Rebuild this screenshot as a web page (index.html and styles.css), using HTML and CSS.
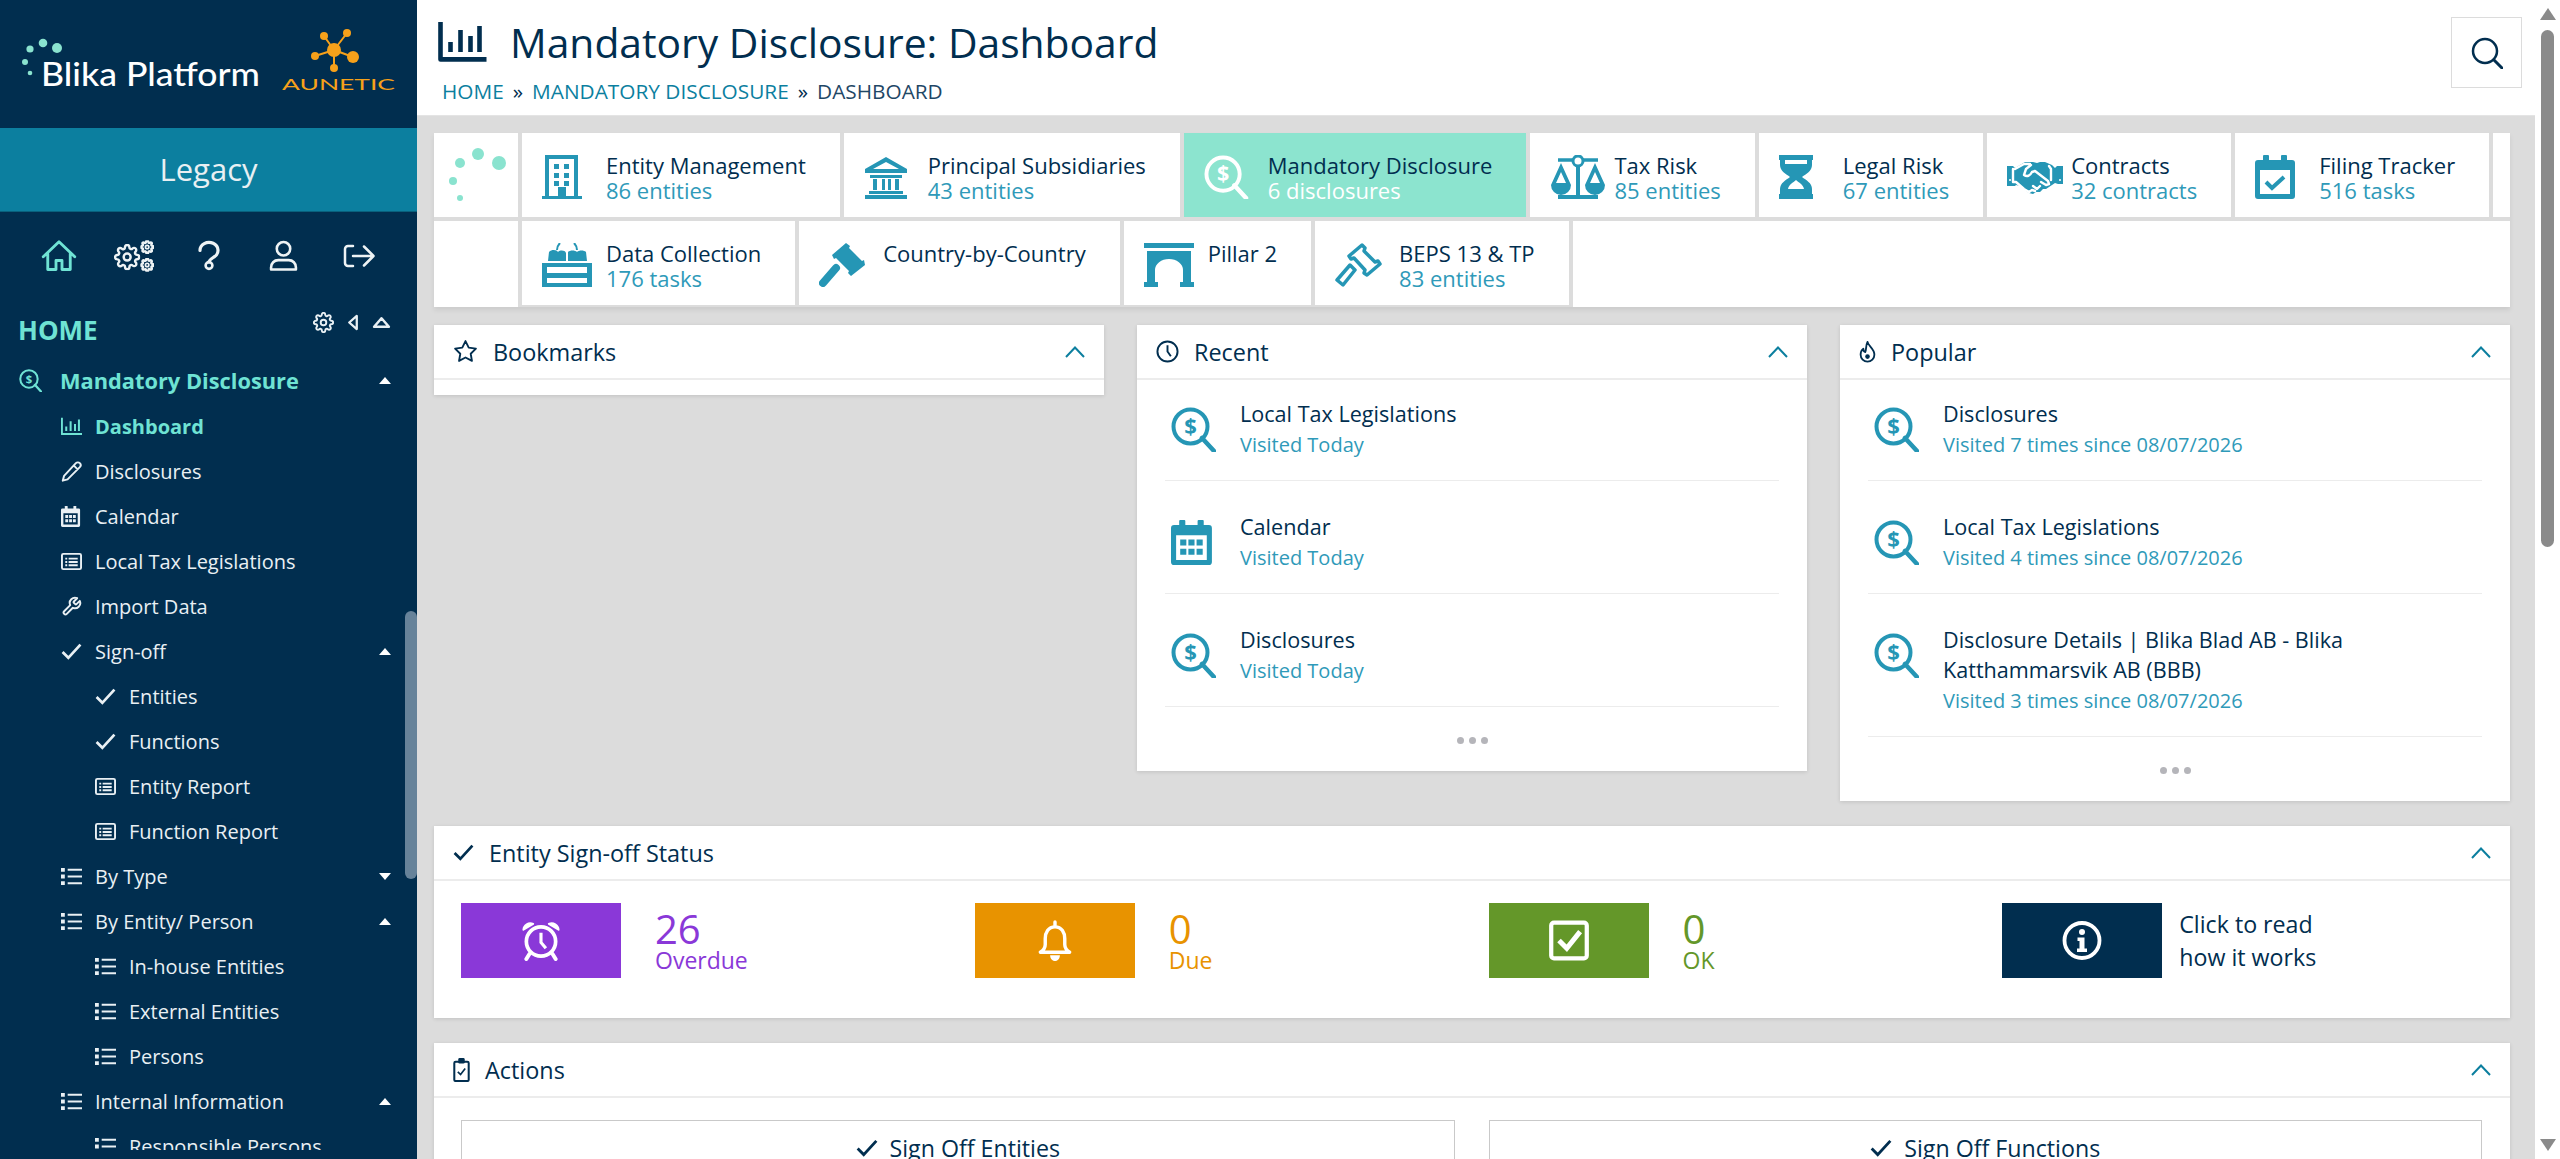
FILE: index.html
```html
<!DOCTYPE html>
<html>
<head>
    <meta charset="UTF-8">
    <title>Mandatory Disclosure: Dashboard</title>
    <link rel="stylesheet" href="styles.css">
</head>

<body>

    <svg class="icon-defs" xmlns="http://www.w3.org/2000/svg">
        <defs>
            <path id="gear-d" fill="none" stroke="currentColor" d="M19.4 15a1.65 1.65 0 0 0 .33 1.82l.06.06a2 2 0 0 1 0 2.83 2 2 0 0 1-2.83 0l-.06-.06a1.65 1.65 0 0 0-1.82-.33 1.65 1.65 0 0 0-1 1.51V21a2 2 0 0 1-2 2 2 2 0 0 1-2-2v-.09A1.65 1.65 0 0 0 9 19.4a1.65 1.65 0 0 0-1.82.33l-.06.06a2 2 0 0 1-2.83 0 2 2 0 0 1 0-2.83l.06-.06a1.65 1.65 0 0 0 .33-1.82 1.65 1.65 0 0 0-1.51-1H3a2 2 0 0 1-2-2 2 2 0 0 1 2-2h.09A1.65 1.65 0 0 0 4.6 9a1.65 1.65 0 0 0-.33-1.82l-.06-.06a2 2 0 0 1 0-2.83 2 2 0 0 1 2.83 0l.06.06a1.65 1.65 0 0 0 1.82.33H9a1.65 1.65 0 0 0 1-1.51V3a2 2 0 0 1 2-2 2 2 0 0 1 2 2v.09a1.65 1.65 0 0 0 1 1.51 1.65 1.65 0 0 0 1.82-.33l.06-.06a2 2 0 0 1 2.83 0 2 2 0 0 1 0 2.83l-.06.06a1.65 1.65 0 0 0-.33 1.82V9a1.65 1.65 0 0 0 1.51 1H21a2 2 0 0 1 2 2 2 2 0 0 1-2 2h-.09a1.65 1.65 0 0 0-1.51 1z"/>
        </defs>
        <symbol id="i-home" viewBox="0 0 24 24"><path d="M1.5 12.5 12 2.5l10.5 10M4.5 10.5V21h5.5v-6h4v6h5.5V10.5" fill="none" stroke="currentColor" stroke-width="1.9" stroke-linejoin="round" stroke-linecap="round"/></symbol>
        <symbol id="i-gear" viewBox="0 0 24 24"><circle cx="12" cy="12" r="3.200" fill="none" stroke="currentColor" stroke-width="2.200"/><use href="#gear-d" stroke-width="2.200"/></symbol>
        <symbol id="i-gear-sm" viewBox="0 0 24 24"><circle cx="12" cy="12" r="3" fill="none" stroke="currentColor" stroke-width="3"/><use href="#gear-d" stroke-width="4"/></symbol>
        <symbol id="i-gears" viewBox="0 0 38 30"><use href="#i-gear" x="0" y="3.500" width="25" height="25"/><use href="#i-gear-sm" x="25" y="0" width="13" height="13"/><use href="#i-gear-sm" x="25" y="17" width="13" height="13"/></symbol>
        <symbol id="i-question" viewBox="0 0 24 30"><path d="M3 10a9 8 0 1 1 14 6.500c-3 2-5 3-5 5" fill="none" stroke="currentColor" stroke-width="3.200" stroke-linecap="round"/><circle cx="12" cy="25" r="3.400" fill="none" stroke="currentColor" stroke-width="2.600"/></symbol>
        <symbol id="i-user" viewBox="0 0 28 30"><circle cx="14" cy="8" r="6.500" fill="none" stroke="currentColor" stroke-width="2.500"/><path d="M2 28v-2c0-4 3-7 7-7h10c4 0 7 3 7 7v2z" fill="none" stroke="currentColor" stroke-width="2.500" stroke-linejoin="round"/></symbol>
        <symbol id="i-logout" viewBox="0 0 32 26"><path d="M10 3H5a3 3 0 0 0-3 3v14a3 3 0 0 0 3 3h5M10 13h20M21 3.500 30.500 13 21 22.500" fill="none" stroke="currentColor" stroke-width="2.500" stroke-linecap="round" stroke-linejoin="round"/></symbol>
        <symbol id="i-left" viewBox="0 0 12 18"><path d="M10 2v14L2 9z" fill="none" stroke="currentColor" stroke-width="2.400" stroke-linejoin="round"/></symbol>
        <symbol id="i-up" viewBox="0 0 18 12"><path d="M2 10h14L9 2z" fill="none" stroke="currentColor" stroke-width="2.400" stroke-linejoin="round"/></symbol>
        <symbol id="i-caret" viewBox="0 0 12 7"><path d="M0 7 6 0l6 7z" fill="currentColor"/></symbol>
        <symbol id="i-dollar" viewBox="0 0 45 45" preserveAspectRatio="xMinYMid meet"><circle cx="19.500" cy="19.500" r="17" fill="none" stroke="currentColor" stroke-width="4"/><path d="M31 31 43 44" fill="none" stroke="currentColor" stroke-width="4.500" stroke-linecap="round"/><text x="19.500" y="27" text-anchor="middle" font-family="Open Sans" font-size="22" font-weight="700" fill="currentColor">$</text></symbol>
        <symbol id="i-chart" viewBox="0 0 24 20"><path d="M1 0v18.700h23" fill="none" stroke="currentColor" stroke-width="2.300" stroke-linejoin="round"/><path d="M6 15V10M11 15V4M16 15V7M20.500 15V2" fill="none" stroke="currentColor" stroke-width="2.300"/></symbol>
        <symbol id="i-pencil" viewBox="0 0 24 24"><path d="M17 2.500a3 3 0 0 1 4.500 4.500L7.500 21 2 22.500l1.500-5.500zM14.500 5l4.500 4.500" fill="none" stroke="currentColor" stroke-width="2.200" stroke-linejoin="round"/></symbol>
        <symbol id="i-calendar" viewBox="0 0 40 44" preserveAspectRatio="xMinYMid meet"><path fill="currentColor" fill-rule="evenodd" d="M0 8a3 3 0 0 1 3-3h34a3 3 0 0 1 3 3v33a3 3 0 0 1-3 3H3a3 3 0 0 1-3-3zM5 15v24h30V15z"/><rect x="8" y="0" width="6" height="9" rx="1" fill="currentColor"/><rect x="26" y="0" width="6" height="9" rx="1" fill="currentColor"/><path fill="currentColor" d="M9 19h6v6H9zM17 19h6v6h-6zM25 19h6v6h-6zM9 28h6v6H9zM17 28h6v6h-6zM25 28h6v6h-6z"/></symbol>
        <symbol id="i-listalt" viewBox="0 0 22 18"><rect x="1" y="1" width="20" height="16" rx="1.500" fill="none" stroke="currentColor" stroke-width="2"/><path d="M4.500 5h2v2h-2zM4.500 8.500h2v2h-2zM4.500 12h2v2h-2zM8 5h9.500v2H8zM8 8.500h9.500v2H8zM8 12h9.500v2H8z" fill="currentColor"/></symbol>
        <symbol id="i-wrench" viewBox="0 0 24 24"><path fill="none" stroke="currentColor" stroke-width="2.200" stroke-linejoin="round" d="M14.700 6.300a1 1 0 0 0 0 1.400l1.600 1.600a1 1 0 0 0 1.400 0l3.770-3.770a6 6 0 0 1-7.940 7.940l-6.910 6.910a2.120 2.120 0 0 1-3-3l6.910-6.910a6 6 0 0 1 7.940-7.940l-3.760 3.760z"/></symbol>
        <symbol id="i-check" viewBox="0 0 20 16"><path d="M1.500 8.500 7 14 18.500 1.500" fill="none" stroke="currentColor" stroke-width="2.600"/></symbol>
        <symbol id="i-listul" viewBox="0 0 22 18"><path fill="currentColor" d="M0 0h4v4H0zM0 7h4v4H0zM0 14h4v4H0zM7 1h15v2H7zM7 8h15v2H7zM7 15h15v2H7z"/></symbol>
        <symbol id="i-building" viewBox="0 0 64 44" preserveAspectRatio="xMinYMid meet"><path fill="currentColor" fill-rule="evenodd" d="M3 0h33v41h4v3H0v-3h3zM7 4v37h9V32h8v9h8V4z"/><path fill="currentColor" d="M12 9h5v5h-5zM22 9h5v5h-5zM12 18h5v5h-5zM22 18h5v5h-5zM12 26h5v5h-5zM22 26h5v5h-5z"/></symbol>
        <symbol id="i-bank" viewBox="0 0 64 44" preserveAspectRatio="xMinYMid meet"><path fill="currentColor" fill-rule="evenodd" d="M22 2 43 14v4H1v-4zM22 7 9 14h26z"/><path fill="currentColor" d="M6 20h32v3H6zM9 24h4v11H9zM18 24h3v11h-3zM24 24h3v11h-3zM31 24h4v11h-4zM5 36h34v3H5zM1 40h42v4H1z"/></symbol>
        <symbol id="i-scale" viewBox="0 0 64 44" preserveAspectRatio="xMinYMid meet"><path fill="none" stroke="currentColor" stroke-width="3.500" d="M8 5h40"/><circle cx="28" cy="6" r="5" fill="#fff" stroke="currentColor" stroke-width="3"/><path fill="currentColor" d="M26 11h4v29h-4zM8 40h40v4H8z"/><path fill="currentColor" fill-rule="evenodd" d="M11 8 1 30a10 10 0 0 0 20 0zM11 17l-5 11h10z"/><path fill="currentColor" fill-rule="evenodd" d="M45 8 35 30a10 10 0 0 0 20 0zM45 17l-5 11h10z"/></symbol>
        <symbol id="i-hourglass" viewBox="0 0 64 44" preserveAspectRatio="xMinYMid meet"><path fill="currentColor" fill-rule="evenodd" d="M0 0h34v5h-1v5c0 6-6 9-10 12 4 3 10 6 10 12v5h1v5H0v-5h1v-5c0-6 6-9 10-12C7 19 1 16 1 10V5H0zM6 5v4h22V5zM17 25c-3 3-7 4-8 9h16c-1-5-5-6-8-9z"/></symbol>
        <symbol id="i-handshake" viewBox="0 -5 64 44" preserveAspectRatio="xMinYMid meet"><path fill="currentColor" d="M0 6h6l2 2 10-6h8l4 1 3-1h5l7 3 3 3 2-2h6v18h-5l-3-1-9 6-3 0-3 3-4 0-3 2-4-1-3-2-6-5-4-1-1 1H0z"/><path fill="none" stroke="#fff" stroke-width="2.400" stroke-linejoin="round" stroke-linecap="round" d="M6 9v13h3l8 7 5 3 3-2 3 1M8 9l9-5h6M24 5l-5 4-2 6c3 2 6 1 8-3l3-1 13 10 1 3-3 1-5-3M33 26l-3 3-4-3M42 6l2 3v11"/><circle cx="3" cy="20" r="1" fill="#fff"/><circle cx="53" cy="20" r="1" fill="#fff"/></symbol>
        <symbol id="i-calcheck" viewBox="0 0 64 44" preserveAspectRatio="xMinYMid meet"><path fill="currentColor" fill-rule="evenodd" d="M0 8a3 3 0 0 1 3-3h34a3 3 0 0 1 3 3v33a3 3 0 0 1-3 3H3a3 3 0 0 1-3-3zM5 15v24h30V15z"/><rect x="8" y="0" width="6" height="9" rx="1" fill="currentColor"/><rect x="26" y="0" width="6" height="9" rx="1" fill="currentColor"/><path d="M11 27l6 6 12-11" fill="none" stroke="currentColor" stroke-width="4"/></symbol>
        <symbol id="i-crate" viewBox="0 0 64 44" preserveAspectRatio="xMinYMid meet"><path fill="currentColor" fill-rule="evenodd" d="M0 20h50v24H0zM5 24v6h40v-6zM5 35v5h40v-5z"/><path fill="currentColor" d="M7 9c3-3 8-2 9 0 2-2 7-2 8 1v8H6zM26 9c2-2 7-2 9 0 2-2 7-2 9 0l1 9H26z"/><path fill="none" stroke="currentColor" stroke-width="2" d="M15 7c0-3 1-5 3-7M35 7c0-3-1-5-3-7"/></symbol>
        <symbol id="i-gavel" viewBox="0 0 64 44" preserveAspectRatio="xMinYMid meet"><path fill="currentColor" d="M27 0l4 3-1 2 13 13 2-1 1 5-14 11-3-3 1-2-13-13-2 1-2-4z"/><path fill="none" stroke="currentColor" stroke-width="8" stroke-linecap="round" d="M17 25 4 40"/></symbol>
        <symbol id="i-gavelout" viewBox="0 0 64 44" preserveAspectRatio="xMinYMid meet"><path fill="none" stroke="currentColor" stroke-width="3.500" stroke-linejoin="round" d="M27 2l3 3-1 3 11 11 3-1 2 3-13 11-3-2 1-3-11-12-3 1-2-3z"/><path fill="none" stroke="currentColor" stroke-width="3.500" stroke-linejoin="round" d="M15 22 20 27 8 42 2 37z"/></symbol>
        <symbol id="i-arch" viewBox="0 0 64 44" preserveAspectRatio="xMinYMid meet"><path fill="currentColor" d="M0 0h50v5H0zM3 8h44v5H3zM0 39h14v5H0zM36 39h14v5H36z"/><path fill="currentColor" fill-rule="evenodd" d="M3 13h44v26H3zM11 39V27a14 11 0 0 1 28 0v12z"/></symbol>
        <symbol id="i-search" viewBox="0 0 32 32"><circle cx="14" cy="14" r="12" fill="none" stroke="currentColor" stroke-width="2.500"/><path d="M23 23 31 31" fill="none" stroke="currentColor" stroke-width="3" stroke-linecap="round"/></symbol>
        <symbol id="i-star" viewBox="0 0 24 24"><path d="M12 2l3.090 6.260L22 9.270l-5 4.870 1.180 6.880L12 17.770l-6.180 3.250L7 14.140 2 9.270l6.910-1.010z" fill="none" stroke="currentColor" stroke-width="1.800" stroke-linejoin="round"/></symbol>
        <symbol id="i-clock" viewBox="0 0 24 24"><circle cx="12" cy="12" r="10.500" fill="none" stroke="currentColor" stroke-width="2"/><path d="M12 5.500V12l3.500 5" fill="none" stroke="currentColor" stroke-width="2"/></symbol>
        <symbol id="i-flame" viewBox="0 0 18 24"><path d="M9 1c1 5 7.500 7 7.500 14a7.500 7.500 0 0 1-15 0c0-3 1-5 3-6.500 0 2 1 3.500 2 3.500C8 9 7 5 9 1z" fill="none" stroke="currentColor" stroke-width="2" stroke-linejoin="round"/><circle cx="9" cy="17" r="2.500" fill="currentColor"/></symbol>
        <symbol id="i-chevron" viewBox="0 0 20 12"><path d="M1 11 10 1.500 19 11" fill="none" stroke="currentColor" stroke-width="2"/></symbol>
        <symbol id="i-clipboard" viewBox="0 0 18 26"><rect x="1.200" y="4" width="15.600" height="21" rx="1.500" fill="none" stroke="currentColor" stroke-width="2.200"/><rect x="5.500" y="0" width="7" height="6" rx="1.500" fill="currentColor"/><path d="M5 15l3 3 5-6.500" fill="none" stroke="currentColor" stroke-width="1.800"/></symbol>
        <symbol id="i-alarm" viewBox="0 0 40 42"><circle cx="20" cy="22" r="15" fill="none" stroke="currentColor" stroke-width="3.800"/><path d="M20 13v10l5 6" fill="none" stroke="currentColor" stroke-width="3.200"/><path d="M2 10a7 7 0 0 1 10-6zM38 10a7 7 0 0 0-10-6z" fill="currentColor" stroke="currentColor" stroke-width="2" stroke-linejoin="round"/><path d="M8 35l-3 5M32 35l3 5" stroke="currentColor" stroke-width="4" stroke-linecap="round"/></symbol>
        <symbol id="i-bell" viewBox="0 0 36 42"><path d="M18 2v5M18 7c-7 0-10 6-10 12v6c0 4-2 6-5 8h30c-3-2-5-4-5-8v-6c0-6-3-12-10-12z" fill="none" stroke="currentColor" stroke-width="3.500" stroke-linejoin="round" stroke-linecap="round"/><path d="M13 36h10c0 3-2 6-5 6s-5-3-5-6z" fill="currentColor"/></symbol>
        <symbol id="i-checkbox" viewBox="0 0 36 36"><rect x="2" y="2" width="32" height="32" rx="2.500" fill="none" stroke="currentColor" stroke-width="3.800"/><path d="M9 18l7 7 12-15" fill="none" stroke="currentColor" stroke-width="4.500"/></symbol>
        <symbol id="i-info" viewBox="0 0 40 40"><circle cx="20" cy="20" r="17.500" fill="none" stroke="currentColor" stroke-width="3.800"/><circle cx="20" cy="11.500" r="3" fill="currentColor"/><path d="M15.500 17h7v11h2.500v3.500H15V28h2.500v-7.500h-2z" fill="currentColor"/></symbol>
    </svg>

    <div class="page">

        <div class="sidebar">
            <div class="brand">
                <svg class="brand-logo" viewBox="0 0 417 128" xmlns="http://www.w3.org/2000/svg">
                    <g fill="#8ae3cf">
                        <circle cx="43" cy="43" r="4.300"/>
                        <circle cx="57" cy="48" r="5"/>
                        <circle cx="30" cy="49" r="3.600"/>
                        <circle cx="25" cy="62" r="3"/>
                        <circle cx="30" cy="73" r="2.300"/>
                    </g>
                    <text x="41" y="86" font-family="Lato" font-size="33" font-weight="500" fill="#fff" textLength="219" lengthAdjust="spacingAndGlyphs">Blika Platform</text>
                    <g stroke="#f7a11a" stroke-width="2">
                        <path d="M334 50 324 36M334 50 347 33M334 50 353 57M334 50V68M334 50 315 56"/>
                    </g>
                    <g fill="#f7a11a">
                        <circle cx="334" cy="50" r="7"/>
                        <circle cx="324" cy="36" r="4"/>
                        <circle cx="347" cy="33" r="4"/>
                        <circle cx="353" cy="57" r="6"/>
                        <circle cx="334" cy="68" r="4"/>
                        <circle cx="315" cy="56" r="4"/>
                    </g>
                    <text x="282" y="90" font-family="Lato" font-size="15" fill="#f7a11a" textLength="113" lengthAdjust="spacingAndGlyphs">AUNETIC</text>
                </svg>
            </div>
            <div class="legacy">Legacy</div>
            <div class="quick-icons">
                <a class="quick-icon active"><svg class="qi-home"><use href="#i-home"/></svg></a>
                <a class="quick-icon"><svg class="qi-gears"><use href="#i-gears"/></svg></a>
                <a class="quick-icon"><svg class="qi-question"><use href="#i-question"/></svg></a>
                <a class="quick-icon"><svg class="qi-user"><use href="#i-user"/></svg></a>
                <a class="quick-icon"><svg class="qi-logout"><use href="#i-logout"/></svg></a>
            </div>
            <div class="home-row">
                <span class="home-label">HOME</span>
                <span class="home-tools">
                    <svg class="tool-gear"><use href="#i-gear"/></svg>
                    <svg class="tool-left"><use href="#i-left"/></svg>
                    <svg class="tool-up"><use href="#i-up"/></svg>
                </span>
            </div>
            <div class="module-row">
                <svg class="module-icon"><use href="#i-dollar"/></svg>
                <span>Mandatory Disclosure</span>
                <svg class="caret"><use href="#i-caret"/></svg>
            </div>
            <ul class="side-menu">
                <li class="active"><svg class="mi"><use href="#i-chart"/></svg><span>Dashboard</span></li>
                <li><svg class="mi"><use href="#i-pencil"/></svg><span>Disclosures</span></li>
                <li><svg class="mi"><use href="#i-calendar"/></svg><span>Calendar</span></li>
                <li><svg class="mi"><use href="#i-listalt"/></svg><span>Local Tax Legislations</span></li>
                <li><svg class="mi"><use href="#i-wrench"/></svg><span>Import Data</span></li>
                <li><svg class="mi"><use href="#i-check"/></svg><span>Sign-off</span><svg class="caret"><use href="#i-caret"/></svg></li>
                <li class="sub"><svg class="mi"><use href="#i-check"/></svg><span>Entities</span></li>
                <li class="sub"><svg class="mi"><use href="#i-check"/></svg><span>Functions</span></li>
                <li class="sub"><svg class="mi"><use href="#i-listalt"/></svg><span>Entity Report</span></li>
                <li class="sub"><svg class="mi"><use href="#i-listalt"/></svg><span>Function Report</span></li>
                <li><svg class="mi"><use href="#i-listul"/></svg><span>By Type</span><svg class="caret down"><use href="#i-caret"/></svg></li>
                <li><svg class="mi"><use href="#i-listul"/></svg><span>By Entity/ Person</span><svg class="caret"><use href="#i-caret"/></svg></li>
                <li class="sub"><svg class="mi"><use href="#i-listul"/></svg><span>In-house Entities</span></li>
                <li class="sub"><svg class="mi"><use href="#i-listul"/></svg><span>External Entities</span></li>
                <li class="sub"><svg class="mi"><use href="#i-listul"/></svg><span>Persons</span></li>
                <li><svg class="mi"><use href="#i-listul"/></svg><span>Internal Information</span><svg class="caret"><use href="#i-caret"/></svg></li>
                <li class="sub"><svg class="mi"><use href="#i-listul"/></svg><span>Responsible Persons</span></li>
            </ul>
            <div class="side-thumb"></div>
        </div>

        <div class="main">
            <div class="topbar">
                <div class="topbar-left">
                    <div class="page-title">
                        <svg class="title-icon"><use href="#i-chart"/></svg>
                        <h1>Mandatory Disclosure: Dashboard</h1>
                    </div>
                    <div class="breadcrumb">
                        <a>HOME</a><span class="sep">»</span><a>MANDATORY DISCLOSURE</a><span class="sep">»</span><span class="current">DASHBOARD</span>
                    </div>
                </div>
                <div class="search-btn"><svg><use href="#i-search"/></svg></div>
            </div>

            <div class="content">
                <div class="tile-rows">
                    <div class="tile-row">
                        <div class="logo-tile">
                            <svg viewBox="0 0 84 84" xmlns="http://www.w3.org/2000/svg">
                                <g fill="#8ae3cf">
                                    <circle cx="44" cy="21" r="6"/>
                                    <circle cx="65" cy="30" r="7"/>
                                    <circle cx="26" cy="30" r="5"/>
                                    <circle cx="19" cy="48" r="4"/>
                                    <circle cx="26" cy="65" r="3"/>
                                </g>
                            </svg>
                        </div>
                        <div class="tile"><svg class="tile-icon"><use href="#i-building"/></svg><div><div class="tile-title">Entity Management</div><div class="tile-sub">86 entities</div></div></div>
                        <div class="tile"><svg class="tile-icon"><use href="#i-bank"/></svg><div><div class="tile-title">Principal Subsidiaries</div><div class="tile-sub">43 entities</div></div></div>
                        <div class="tile selected"><svg class="tile-icon"><use href="#i-dollar"/></svg><div><div class="tile-title">Mandatory Disclosure</div><div class="tile-sub">6 disclosures</div></div></div>
                        <div class="tile"><svg class="tile-icon"><use href="#i-scale"/></svg><div><div class="tile-title">Tax Risk</div><div class="tile-sub">85 entities</div></div></div>
                        <div class="tile"><svg class="tile-icon"><use href="#i-hourglass"/></svg><div><div class="tile-title">Legal Risk</div><div class="tile-sub">67 entities</div></div></div>
                        <div class="tile"><svg class="tile-icon"><use href="#i-handshake"/></svg><div><div class="tile-title">Contracts</div><div class="tile-sub">32 contracts</div></div></div>
                        <div class="tile"><svg class="tile-icon"><use href="#i-calcheck"/></svg><div><div class="tile-title">Filing Tracker</div><div class="tile-sub">516 tasks</div></div></div>
                        <div class="tile filler"></div>
                    </div>
                    <div class="tile-row second">
                        <div class="logo-tile blank"></div>
                        <div class="tile"><svg class="tile-icon"><use href="#i-crate"/></svg><div><div class="tile-title">Data Collection</div><div class="tile-sub">176 tasks</div></div></div>
                        <div class="tile"><svg class="tile-icon"><use href="#i-gavel"/></svg><div><div class="tile-title">Country-by-Country</div></div></div>
                        <div class="tile"><svg class="tile-icon"><use href="#i-arch"/></svg><div><div class="tile-title">Pillar 2</div></div></div>
                        <div class="tile"><svg class="tile-icon"><use href="#i-gavelout"/></svg><div><div class="tile-title">BEPS 13 &amp; TP</div><div class="tile-sub">83 entities</div></div></div>
                        <div class="tile filler"></div>
                    </div>
                </div>

                <div class="columns">
                    <div class="panel">
                        <div class="panel-head"><svg class="ph-icon star"><use href="#i-star"/></svg><span>Bookmarks</span><svg class="chevron"><use href="#i-chevron"/></svg></div>
                        <div class="panel-empty"></div>
                    </div>
                    <div class="panel">
                        <div class="panel-head"><svg class="ph-icon clock"><use href="#i-clock"/></svg><span>Recent</span><svg class="chevron"><use href="#i-chevron"/></svg></div>
                        <div class="visit-list">
                            <div class="visit"><svg class="visit-icon"><use href="#i-dollar"/></svg><div><div class="visit-title">Local Tax Legislations</div><div class="visit-sub">Visited Today</div></div></div>
                            <div class="visit"><svg class="visit-icon"><use href="#i-calendar"/></svg><div><div class="visit-title">Calendar</div><div class="visit-sub">Visited Today</div></div></div>
                            <div class="visit"><svg class="visit-icon"><use href="#i-dollar"/></svg><div><div class="visit-title">Disclosures</div><div class="visit-sub">Visited Today</div></div></div>
                        </div>
                        <div class="more"><i></i><i></i><i></i></div>
                    </div>
                    <div class="panel">
                        <div class="panel-head"><svg class="ph-icon flame"><use href="#i-flame"/></svg><span>Popular</span><svg class="chevron"><use href="#i-chevron"/></svg></div>
                        <div class="visit-list">
                            <div class="visit"><svg class="visit-icon"><use href="#i-dollar"/></svg><div><div class="visit-title">Disclosures</div><div class="visit-sub">Visited 7 times since 08/07/2026</div></div></div>
                            <div class="visit"><svg class="visit-icon"><use href="#i-dollar"/></svg><div><div class="visit-title">Local Tax Legislations</div><div class="visit-sub">Visited 4 times since 08/07/2026</div></div></div>
                            <div class="visit"><svg class="visit-icon"><use href="#i-dollar"/></svg><div><div class="visit-title">Disclosure Details | Blika Blad AB - Blika Katthammarsvik AB (BBB)</div><div class="visit-sub">Visited 3 times since 08/07/2026</div></div></div>
                        </div>
                        <div class="more"><i></i><i></i><i></i></div>
                    </div>
                </div>

                <div class="panel wide">
                    <div class="panel-head"><svg class="ph-icon tick"><use href="#i-check"/></svg><span>Entity Sign-off Status</span><svg class="chevron"><use href="#i-chevron"/></svg></div>
                    <div class="status-grid">
                        <div class="status purple">
                            <div class="status-box"><svg><use href="#i-alarm"/></svg></div>
                            <div class="status-text"><div class="status-num">26</div><div class="status-label">Overdue</div></div>
                        </div>
                        <div class="status orange">
                            <div class="status-box"><svg><use href="#i-bell"/></svg></div>
                            <div class="status-text"><div class="status-num">0</div><div class="status-label">Due</div></div>
                        </div>
                        <div class="status green">
                            <div class="status-box"><svg><use href="#i-checkbox"/></svg></div>
                            <div class="status-text"><div class="status-num">0</div><div class="status-label">OK</div></div>
                        </div>
                        <div class="status navy">
                            <div class="status-box"><svg><use href="#i-info"/></svg></div>
                            <div class="status-note">Click to read<br>how it works</div>
                        </div>
                    </div>
                </div>

                <div class="panel wide actions">
                    <div class="panel-head"><svg class="ph-icon clip"><use href="#i-clipboard"/></svg><span>Actions</span><svg class="chevron"><use href="#i-chevron"/></svg></div>
                    <div class="action-grid">
                        <div class="action-btn"><svg><use href="#i-check"/></svg>Sign Off Entities</div>
                        <div class="action-btn"><svg><use href="#i-check"/></svg>Sign Off Functions</div>
                    </div>
                </div>
            </div>
        </div>

        <div class="page-scroll">
            <span class="arrow up"></span>
            <div class="page-track"><div class="page-thumb"></div></div>
            <span class="arrow down"></span>
        </div>

    </div>

</body>

</html>
```

FILE: styles.css
```css
* {
    box-sizing: border-box;
}

html, body {
    margin: 0;
    padding: 0;
    height: 100%;
    overflow: hidden;
}

body {
    font-family: 'Open Sans', sans-serif;
    font-size: 20px;
    color: #012e4f;
    background-color: #fff;
}

.icon-defs {
    position: absolute;
    width: 0;
    height: 0;
}

.page {
    display: flex;
    height: 1159px;
}

/* sidebar */

.sidebar {
    position: relative;
    flex: none;
    width: 417px;
    background-color: #012e4f;
    color: #e9f0f4;
    overflow: hidden;
    padding-bottom: 9px;
    display: flex;
    flex-direction: column;
}

.brand {
    flex: none;
    height: 128px;
}

.brand-logo {
    display: block;
    width: 417px;
    height: 128px;
}

.legacy {
    flex: none;
    height: 84px;
    line-height: 83px;
    background-color: #0c7f9f;
    border-bottom: 1px solid #09617d;
    text-align: center;
    font-size: 31px;
    color: #e8f0f3;
}

.quick-icons {
    flex: none;
    height: 87px;
    padding: 0 21px;
    display: grid;
    grid-template-columns: repeat(5, 75px);
    align-items: center;
    justify-items: center;
}

.quick-icon {
    color: #eef3f5;
    display: flex;
}

.quick-icon.active {
    color: #6fe3d4;
}

.qi-home { width: 36px; height: 36px; }
.qi-gears { width: 40px; height: 32px; }
.qi-question { width: 24px; height: 31px; }
.qi-user { width: 29px; height: 32px; }
.qi-logout { width: 32px; height: 26px; }

.home-row {
    flex: none;
    height: 58px;
    padding: 3px 26px 0 18px;
    display: flex;
    align-items: center;
    justify-content: space-between;
}

.home-label {
    color: #6fe3d4;
    font-size: 26px;
    font-weight: 700;
}

.home-tools {
    display: flex;
    align-items: center;
    gap: 13px;
    margin-top: -14px;
}

.tool-gear { width: 21px; height: 21px; }
.tool-left { width: 12px; height: 17px; }
.tool-up { width: 19px; height: 13px; }

.module-row {
    flex: none;
    height: 46px;
    padding: 0 26px 0 19px;
    display: flex;
    align-items: center;
    color: #6fe3d4;
    font-size: 21.800px;
    font-weight: 700;
}

.module-icon {
    flex: none;
    width: 23px;
    height: 23px;
    margin-right: 18px;
}

.caret {
    flex: none;
    width: 12px;
    height: 7px;
    margin-left: auto;
    color: #fff;
}

.caret.down {
    transform: rotate(180deg);
}

.side-menu {
    list-style: none;
    margin: 1px 0 0;
    padding: 0;
    height: 746px;
    overflow: hidden;
}

.side-menu li {
    height: 45px;
    padding: 0 26px 0 61px;
    display: flex;
    align-items: center;
    font-size: 20px;
}

.side-menu li.sub {
    padding-left: 95px;
}

.side-menu li.active {
    color: #6fe3d4;
    font-weight: 700;
}

.mi {
    flex: none;
    width: 21px;
    height: 21px;
    margin-right: 13px;
}

.side-thumb {
    position: absolute;
    left: 405px;
    top: 611px;
    width: 12px;
    height: 268px;
    border-radius: 6px;
    background-color: #67839a;
}

/* main column */

.main {
    flex: 1;
    min-width: 0;
    display: flex;
    flex-direction: column;
    background-color: #dcdcdc;
    overflow: hidden;
}

.topbar {
    flex: none;
    height: 116px;
    background-color: #fff;
    border-bottom: 1px solid #e4e4e4;
    padding: 16px 13px 0 21px;
    display: flex;
    justify-content: space-between;
    align-items: flex-start;
}

.page-title {
    display: flex;
    align-items: center;
    height: 52px;
}

.title-icon {
    width: 49px;
    height: 40px;
    margin-right: 23px;
}

.page-title h1 {
    margin: 0;
    font-size: 40.800px;
    font-weight: 500;
    line-height: 52px;
}

.breadcrumb {
    margin-top: 7px;
    padding-left: 4px;
    font-size: 20.800px;
    line-height: 32px;
    color: #1f4766;
}

.breadcrumb a {
    color: #0c7f9f;
}

.breadcrumb .sep {
    margin: 0 9px;
    color: #012e4f;
}

.search-btn {
    width: 71px;
    height: 71px;
    margin-top: 1px;
    border: 1px solid #dcdcdc;
    display: flex;
    align-items: center;
    justify-content: center;
    flex: none;
}

.search-btn svg {
    width: 32px;
    height: 32px;
}

.content {
    flex: 1;
    padding: 17px 25px 0 17px;
    overflow: hidden;
}

/* tiles */

.tile-rows {
    display: flex;
    flex-direction: column;
    gap: 4px;
    box-shadow: 0 3px 5px rgba(0, 0, 0, 0.08);
}

.tile-row {
    display: flex;
    gap: 4px;
    height: 84px;
    overflow: hidden;
}

.tile-row.second {
    height: 86px;
}

.logo-tile {
    flex: none;
    width: 84px;
    background-color: #fff;
}

.logo-tile svg {
    display: block;
    width: 84px;
    height: 84px;
}

.tile {
    flex: none;
    height: 84px;
    padding: 20px 34px 0 20px;
    display: flex;
    align-items: flex-start;
    background-color: #fff;
}

.tile.selected {
    background-color: #8ce4cf;
}

.tile.selected .tile-sub,
.tile.selected .tile-icon {
    color: #fff;
}

.tile.filler {
    flex: 1;
    height: 86px;
    padding: 0;
}

.tile-icon {
    flex: none;
    width: 64px;
    height: 44px;
    margin-top: 2px;
    color: #2596b5;
}

.tile-title {
    font-size: 22px;
    font-weight: 500;
    line-height: 25px;
}

.tile-sub {
    font-size: 22px;
    line-height: 25px;
    color: #2f9ab9;
}

/* panels */

.columns {
    display: grid;
    grid-template-columns: repeat(3, 1fr);
    gap: 33px;
    align-items: start;
    margin-top: 18px;
}

.panel {
    background-color: #fff;
    box-shadow: 0 1px 4px rgba(0, 0, 0, 0.12);
}

.panel.wide {
    margin-top: 25px;
}

.panel.actions {
    margin-top: 25px;
}

.panel-head {
    height: 55px;
    padding: 0 19px;
    display: flex;
    align-items: center;
    border-bottom: 2px solid #ececec;
    font-size: 23.400px;
    font-weight: 500;
}

.ph-icon {
    flex: none;
    margin-right: 15px;
}

.ph-icon.star { width: 25px; height: 25px; }
.ph-icon.clock { width: 23px; height: 23px; }
.ph-icon.flame { width: 17px; height: 22px; }
.ph-icon.tick { width: 21px; height: 17px; }
.ph-icon.clip { width: 17px; height: 24px; }

.chevron {
    flex: none;
    width: 20px;
    height: 12px;
    margin-left: auto;
    color: #0c7f9f;
}

.panel-empty {
    height: 15px;
}

.visit-list {
    padding: 0 28px;
    display: flex;
    flex-direction: column;
    gap: 12px;
}

.visit {
    padding: 19px 0;
    display: flex;
    align-items: flex-start;
    border-bottom: 1px solid #ececec;
}

.visit-icon {
    flex: none;
    width: 45px;
    height: 45px;
    margin: 8px 24px 0 6px;
    color: #2596b5;
}

.visit-title {
    font-size: 21.600px;
    font-weight: 500;
    line-height: 30px;
}

.visit-sub {
    font-size: 20px;
    line-height: 32px;
    color: #2f9ab9;
}

.more {
    height: 64px;
    padding-top: 2px;
    display: flex;
    align-items: center;
    justify-content: center;
    gap: 5px;
}

.more i {
    width: 7px;
    height: 7px;
    border-radius: 50%;
    background-color: #b5b5ba;
}

/* status */

.status-grid {
    padding: 22px 28px 40px 27px;
    display: grid;
    grid-template-columns: repeat(4, 1fr);
    gap: 34px;
}

.status {
    display: flex;
    align-items: center;
}

.status-box {
    flex: none;
    width: 160px;
    height: 75px;
    color: #fff;
    display: flex;
    align-items: center;
    justify-content: center;
}

.status-box svg {
    width: 40px;
    height: 41px;
}

.status-text {
    margin-left: 34px;
}

.status-num {
    font-size: 40px;
    font-weight: 500;
    line-height: 38px;
}

.status-label {
    font-size: 23px;
    line-height: 24px;
}

.status-note {
    margin-left: 17px;
    font-size: 23.200px;
    line-height: 33px;
}

.purple .status-box { background-color: #8a38d8; }
.purple .status-text { color: #8a38d8; }
.orange .status-box { background-color: #e89300; }
.orange .status-text { color: #e89300; }
.green .status-box { background-color: #649729; }
.green .status-text { color: #649729; }
.navy .status-box { background-color: #012e4f; }

/* actions */

.action-grid {
    padding: 22px 28px 0 27px;
    display: grid;
    grid-template-columns: repeat(2, 1fr);
    gap: 34px;
}

.action-btn {
    height: 56px;
    border: 1px solid #c9c9c9;
    display: flex;
    align-items: center;
    justify-content: center;
    font-size: 23.200px;
}

.action-btn svg {
    width: 22px;
    height: 18px;
    margin-right: 12px;
}

/* page scrollbar */

.page-scroll {
    flex: none;
    width: 25px;
    display: flex;
    flex-direction: column;
    align-items: center;
    background-color: #fff;
    padding: 8px 0;
}

.page-track {
    flex: 1;
    width: 100%;
    padding: 10px 6px 0;
}

.page-thumb {
    height: 517px;
    border-radius: 7px;
    background-color: #8a8a8a;
}

.arrow {
    width: 0;
    height: 0;
    border-left: 8px solid transparent;
    border-right: 8px solid transparent;
}

.arrow.up {
    border-bottom: 12px solid #8a8a8a;
}

.arrow.down {
    border-top: 12px solid #8a8a8a;
}
```
